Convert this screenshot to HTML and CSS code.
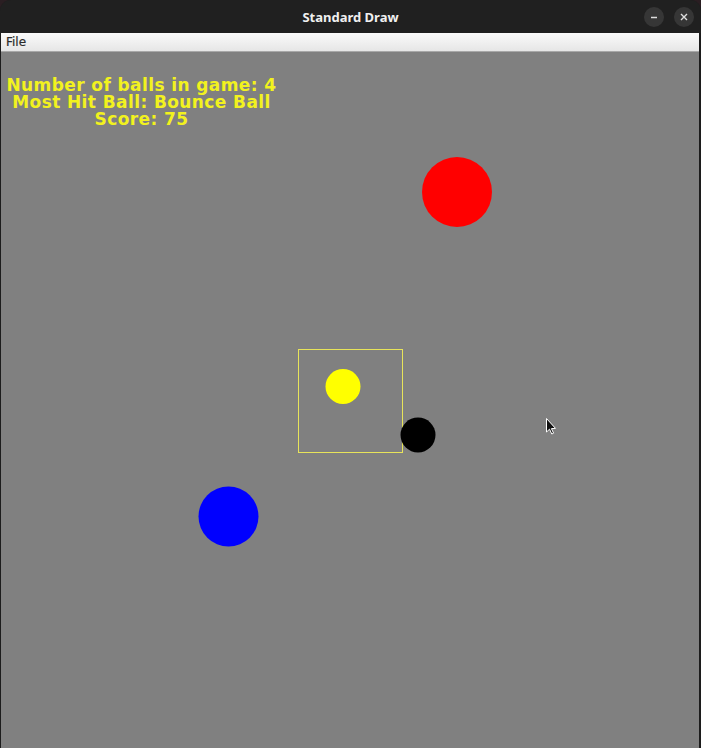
FILE: index.html
```html
<!DOCTYPE html>
<html>
<head>
<meta charset="utf-8">
<link rel="stylesheet" href="styles.css">
</head>
<body>
<div class="window">
  <div class="titlebar">
    <div class="spacer"></div>
    <div class="title">Standard Draw</div>
    <div class="controls">
      <span class="btn"><svg width="10" height="10" viewBox="0 0 10 10"><path d="M2 5.5h6" stroke="#ddd" stroke-width="1.4"/></svg></span>
      <span class="btn"><svg width="10" height="10" viewBox="0 0 10 10"><path d="M2 2L8 8M8 2L2 8" stroke="#ddd" stroke-width="1.4"/></svg></span>
    </div>
  </div>
  <div class="menubar"><span class="menu">File</span></div>
  <div class="canvas">
    <svg class="drawing" width="699" height="696" viewBox="0 0 699 696">
      <circle cx="456" cy="140" r="35" fill="#ff0000"/>
      <rect x="297.5" y="297.5" width="104" height="103" fill="none" stroke="#e8e45a" stroke-width="1"/>
      <circle cx="342" cy="334.5" r="17.5" fill="#ffff00"/>
      <circle cx="417" cy="383" r="17.5" fill="#000"/>
      <circle cx="227.5" cy="464.5" r="30" fill="#0000ff"/>
      <path d="M545.5 366.5 L545.5 380 L548.5 377.2 L550.8 382 L552.6 381.2 L550.4 376.6 L554.5 376.4 Z" fill="#111" stroke="#fff" stroke-width="1" stroke-linejoin="round"/>
    </svg>
    <div class="hud">
      <div>Number of balls in game: 4</div>
      <div>Most Hit Ball: Bounce Ball</div>
      <div>Score: 75</div>
    </div>
  </div>
</div>
</body>
</html>
```
FILE: styles.css
```css
html, body {
  margin: 0;
  padding: 0;
  background: #2a1e22;
}
body {
  width: 701px;
  height: 748px;
  overflow: hidden;
}
.window {
  width: 701px;
  height: 748px;
  display: flex;
  flex-direction: column;
  background: #1c1c1c;
  border-radius: 11px 11px 0 0;
  overflow: hidden;
}
.titlebar {
  height: 33px;
  flex: none;
  background: #202020;
  display: grid;
  grid-template-columns: 1fr auto 1fr;
  align-items: center;
}
.title {
  font-family: "Noto Sans", "DejaVu Sans", sans-serif;
  font-weight: bold;
  font-size: 13px;
  color: #f0f0f0;
  padding-top: 1px;
}
.controls {
  display: flex;
  justify-content: flex-end;
  gap: 10px;
  padding-right: 7px;
}
.btn {
  width: 20px;
  height: 20px;
  border-radius: 50%;
  background: #363636;
  display: flex;
  align-items: center;
  justify-content: center;
}
.menubar {
  height: 18px;
  flex: none;
  margin: 0 2px 0 1px;
  background: linear-gradient(#fafafa, #e6e6e6);
  border-bottom: 1px solid #a8a8a8;
  display: flex;
  align-items: center;
}
.menu {
  font-family: "DejaVu Sans", sans-serif;
  font-size: 12px;
  font-weight: 500;
  color: #2a2a2a;
  padding-left: 5px;
  -webkit-text-stroke: 0.2px #2a2a2a;
}
.canvas {
  flex: 1;
  margin: 0 2px 0 1px;
  background: #808080;
  position: relative;
}
.drawing {
  position: absolute;
  left: 0;
  top: 0;
}
.hud {
  position: relative;
  width: 281px;
  padding-top: 25px;
  text-align: center;
  font-family: "DejaVu Sans", sans-serif;
  font-weight: bold;
  font-size: 17px;
  letter-spacing: 0.4px;
  line-height: 17px;
  color: #f2f21e;
}
```
